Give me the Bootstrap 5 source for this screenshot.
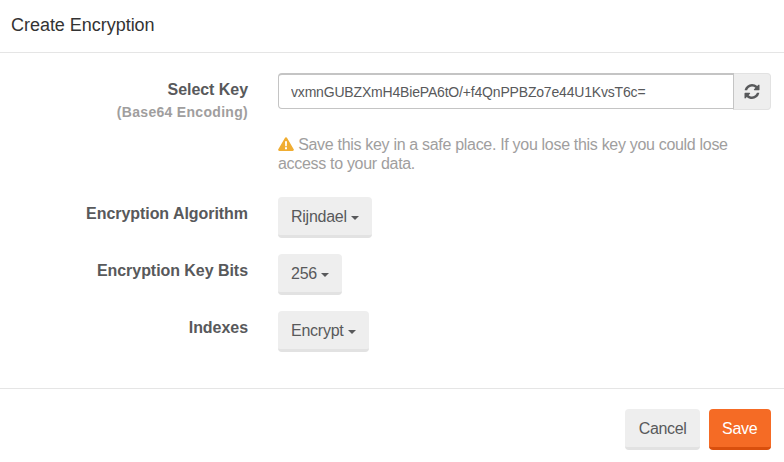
<!DOCTYPE html>
<html lang="en">
<head>
<meta charset="utf-8">
<title>Create Encryption</title>
<link href="https://cdn.jsdelivr.net/npm/bootstrap@5.3.0/dist/css/bootstrap.min.css" rel="stylesheet">
<style>
html,body{height:462px;overflow:hidden;background:#fff;}
body{font-family:"Liberation Sans",Arial,sans-serif;font-size:14px;color:#58595b;}
.enc-head{height:53px;padding:0 11px;border-bottom:1px solid #e5e5e5;display:flex;align-items:center;}
.enc-title{font-size:18px;line-height:1;margin:0 0 2px;font-weight:400;color:#333;letter-spacing:-.03px;}
.enc-body{height:335px;padding:20px 13px 0 0;}
.enc-row{display:flex;}
.enc-label{width:248px;flex:none;text-align:right;font-weight:700;font-size:16px;letter-spacing:-.05px;line-height:20px;padding-top:7px;color:#58595b;}
.enc-sub{display:block;font-size:14px;color:#a09e9e;line-height:16px;margin-top:4px;letter-spacing:.3px;}
.enc-ctrl{margin-left:30px;flex:1 1 auto;min-width:0;}
.enc-input{height:36px;font-size:14px;letter-spacing:-.18px;color:#58595b;border:1px solid #c4c4c4;border-top-width:2px;border-radius:4px 0 0 4px!important;padding:0 12px;box-shadow:none;font-family:inherit;}
.enc-addon{width:38px;height:37px;background:#eee;border:1px solid #e2e2e2;border-left:1px solid #d0d0d0;border-radius:0 4px 4px 0;padding:0;display:flex;align-items:center;justify-content:center;}
.enc-note{margin:25px 0 0;font-size:16px;line-height:19px;letter-spacing:-.31px;color:#a09e9e;}
.enc-note svg{vertical-align:-1px;}
.enc-pick{height:41px;font-size:16px;letter-spacing:-.25px;padding:1px 13px 0;color:#58595b;background:#eee;border:0;border-bottom:3px solid #e2e2e2;border-radius:4px;display:inline-flex;align-items:center;gap:4px;}
.enc-pick::after{content:"";border-top:4px solid #58595b;border-left:4px solid transparent;border-right:4px solid transparent;margin-top:2px;}
.enc-foot{border-top:1px solid #e5e5e5;padding:20px 13px 0 0;display:flex;justify-content:flex-end;gap:9px;}
.enc-btn{height:41px;font-size:16px;letter-spacing:-.25px;padding:1px 13.500px 0;border:0;border-radius:4px;}
.enc-cancel{background:#eee;border-bottom:3px solid #e2e2e2;color:#58595b;padding:1px 13px 0 14px;letter-spacing:-.35px;}
.enc-save{background:#f56b25;border-bottom:3px solid #d94f0d;color:#fff;}
.enc-gap-a{margin-top:24px;}
.enc-gap-b{margin-top:16px;}
</style>
</head>
<body>
<header class="enc-head"><h1 class="enc-title">Create Encryption</h1></header>
<main class="enc-body">
  <form>
  <div class="enc-row">
    <div class="enc-label">Select Key<span class="enc-sub">(Base64 Encoding)</span></div>
    <div class="enc-ctrl">
      <div class="input-group flex-nowrap">
        <input class="form-control enc-input" type="text" value="vxmnGUBZXmH4BiePA6tO/+f4QnPPBZo7e44U1KvsT6c=" aria-label="Key">
        <button class="enc-addon" type="button" aria-label="Refresh">
          <svg width="16" height="15" viewBox="0 0 1536 1536" fill="#58595b"><path d="M1511 928q0 5-1 7-64 268-268 434.500t-478 166.500q-146 0-282.500-55t-243.500-157l-129 129q-19 19-45 19t-45-19-19-45v-448q0-26 19-45t45-19h448q26 0 45 19t19 45-19 45l-137 137q71 66 161 102t187 36q134 0 250-65t186-179q11-17 53-117 8-23 30-23h192q13 0 22.500 9.500t9.500 22.500zm25-800v448q0 26-19 45t-45 19h-448q-26 0-45-19t-19-45 19-45l138-138q-148-137-349-137-134 0-250 65t-186 179q-11 17-53 117-8 23-30 23h-199q-13 0-22.500-9.500t-9.500-22.500v-7q65-268 270-434.500t480-166.500q146 0 284 55.500t245 156.500l130-129q19-19 45-19t45 19 19 45z"/></svg>
        </button>
      </div>
      <p class="enc-note"><svg width="16" height="14" viewBox="0 0 16 14"><path d="M8 0.3c.5 0 .9.3 1.100.7l6.600 11.200c.5.8-.1 1.800-1.100 1.800H1.400c-1 0-1.600-1-1.100-1.800L6.900 1c.2-.4.600-.7 1.100-.7z" fill="#f0ad32"/><path d="M7 4.300h2l-.2 5H7.200zM7 10.300h2v2H7z" fill="#fff"/></svg> Save this key in a safe place. If you lose this key you could lose access to your data.</p>
    </div>
  </div>
  <div class="enc-row enc-gap-a">
    <div class="enc-label">Encryption Algorithm</div>
    <div class="enc-ctrl"><button class="enc-pick" type="button">Rijndael</button></div>
  </div>
  <div class="enc-row enc-gap-b">
    <div class="enc-label">Encryption Key Bits</div>
    <div class="enc-ctrl"><button class="enc-pick" type="button">256</button></div>
  </div>
  <div class="enc-row enc-gap-b">
    <div class="enc-label">Indexes</div>
    <div class="enc-ctrl"><button class="enc-pick" type="button">Encrypt</button></div>
  </div>
  </form>
</main>
<footer class="enc-foot">
  <button class="enc-btn enc-cancel" type="button">Cancel</button>
  <button class="enc-btn enc-save" type="button">Save</button>
</footer>
<script src="https://cdn.jsdelivr.net/npm/bootstrap@5.3.0/dist/js/bootstrap.bundle.min.js"></script>
</body>
</html>
